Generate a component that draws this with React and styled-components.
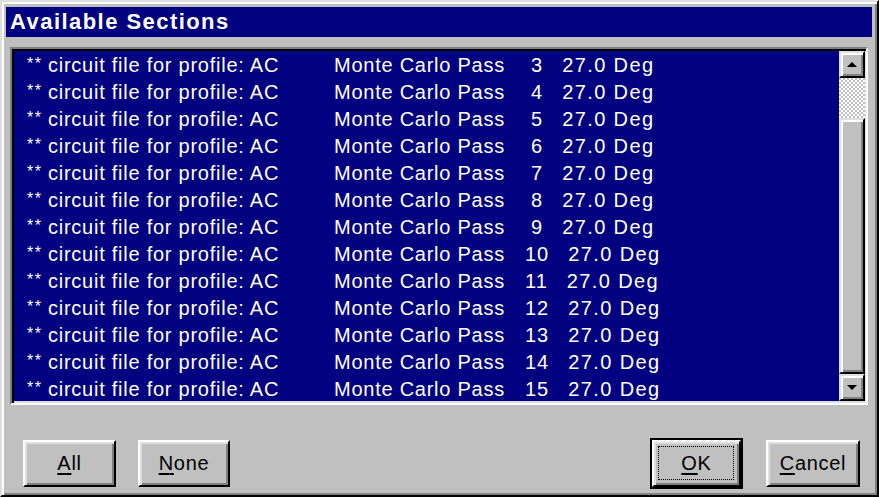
import React from "react";
import styled, { createGlobalStyle, css } from "styled-components";

const Global = createGlobalStyle`
  html, body { margin: 0; padding: 0; background: #c0c0c0; }
  body { font-family: "Liberation Sans", Arial, sans-serif; }
  * { box-sizing: border-box; }
`;

const Window = styled.div`
  width: 879px;
  height: 497px;
  background: #c0c0c0;
  border: 2px solid;
  border-color: #dfdfdf #000 #000 #dfdfdf;
  box-shadow: inset 2px 2px #fff, inset -2px -2px #808080;
  padding: 5px 5px 0 4px;
  display: flex;
  flex-direction: column;
`;

const TitleBar = styled.div`
  height: 30px;
  background: #000080;
  color: #fff;
  font-weight: bold;
  font-size: 22px;
  letter-spacing: 1.45px;
  line-height: 30px;
  padding-left: 4px;
  white-space: nowrap;
`;

const Body = styled.div`
  padding: 10px 4px 0 4px;
  display: flex;
  flex-direction: column;
`;

const ListBox = styled.div`
  height: 358px;
  display: flex;
  border: 2px solid;
  border-color: #808080 #fff #fff #808080;
  box-shadow: inset 2px 2px #000, inset -2px -2px #dfdfdf;
  padding: 2px;
  background: #000080;
`;

const Rows = styled.div`
  flex: 1;
  overflow: hidden;
  padding-top: 1px;
  margin-left: -2px;
`;

const Row = styled.div`
  display: grid;
  grid-template-columns: 22px 286px 191px auto;
  height: 27px;
  line-height: 27px;
  padding-left: 14px;
  color: #fff;
  font-size: 20px;
  letter-spacing: 0.75px;
  white-space: pre;
`;

const Stars = styled.span`
  font-size: 16px;
  letter-spacing: 1.5px;
  line-height: 23px;
  padding-left: 1px;
`;

const Value = styled.span`
  display: flex;
  letter-spacing: 1px;
`;

const Num = styled.span`
  padding-left: ${(p) => (p.$single ? "6px" : "0")};
`;

const Deg = styled.span`
  margin-left: 19px;
  letter-spacing: 1.4px;
`;

const bevel = css`
  border: 2px solid;
  border-color: #dfdfdf #000 #000 #dfdfdf;
  box-shadow: inset 2px 2px #fff, inset -2px -2px #808080;
  background: #c0c0c0;
`;

const ScrollBar = styled.div`
  width: 26px;
  display: flex;
  flex-direction: column;
  margin-right: -1px;
`;

const ArrowButton = styled.div`
  ${bevel};
  height: 27px;
  display: flex;
  align-items: center;
  justify-content: center;
  flex: none;
`;

const Arrow = styled.div`
  width: 0;
  height: 0;
  border-left: 5px solid transparent;
  border-right: 5px solid transparent;
  ${(p) =>
    p.$dir === "up"
      ? css`border-bottom: 5px solid #000;`
      : css`border-top: 5px solid #000;`}
`;

const Track = styled.div`
  height: 40px;
  flex: none;
  background-color: #c0c0c0;
  background-image: repeating-conic-gradient(#fff 0 25%, #c0c0c0 0 50%);
  background-size: 4px 4px;
`;

const Thumb = styled.div`
  ${bevel};
  flex: 1;
`;

const ButtonRow = styled.div`
  display: flex;
  align-items: center;
  margin-top: 35px;
  padding: 0 8px 0 13px;
`;

const Button = styled.div`
  ${bevel};
  border-color: #fff #000 #000 #fff;
  box-shadow: inset 2px 2px #dfdfdf, inset -2px -2px #808080;
  width: ${(p) => p.$w}px;
  height: 47px;
  margin-left: ${(p) => p.$ml || 0}px;
  display: flex;
  align-items: center;
  justify-content: center;
  font-size: 20px;
  letter-spacing: 0.7px;
  color: #000;
  position: relative;
  ${(p) =>
    p.$default &&
    css`
      outline: 2px solid #000;
      outline-offset: 0;
    `}
`;

const Focus = styled.span`
  position: absolute;
  inset: 4px 5px 5px 4px;
  border: 1px dotted #000;
  pointer-events: none;
`;

const Spacer = styled.div`
  flex: 1;
`;

const U = styled.span`
  text-decoration: underline;
  text-underline-offset: 3px;
`;

const rows = Array.from({ length: 13 }, (_, i) => i + 3);

export default function App() {
  return (
    <>
      <Global />
      <Window>
        <TitleBar>Available Sections</TitleBar>
        <Body>
          <ListBox>
            <Rows>
              {rows.map((n) => (
                <Row key={n}>
                  <Stars>**</Stars>
                  <span>circuit file for profile: AC</span>
                  <span>Monte Carlo Pass</span>
                  <Value>
                    <Num $single={n < 10}>{n}</Num>
                    <Deg>27.0 Deg</Deg>
                  </Value>
                </Row>
              ))}
            </Rows>
            <ScrollBar>
              <ArrowButton>
                <Arrow $dir="up" />
              </ArrowButton>
              <Track />
              <Thumb />
              <ArrowButton>
                <Arrow $dir="down" />
              </ArrowButton>
            </ScrollBar>
          </ListBox>
          <ButtonRow>
            <Button $w={93}>
              <span><U>A</U>ll</span>
            </Button>
            <Button $w={92} $ml={22}>
              <span><U>N</U>one</span>
            </Button>
            <Spacer />
            <Button $w={89} $default>
              <span><U>O</U>K</span>
              <Focus />
            </Button>
            <Button $w={94} $ml={25}>
              <span><U>C</U>ancel</span>
            </Button>
          </ButtonRow>
        </Body>
      </Window>
    </>
  );
}
